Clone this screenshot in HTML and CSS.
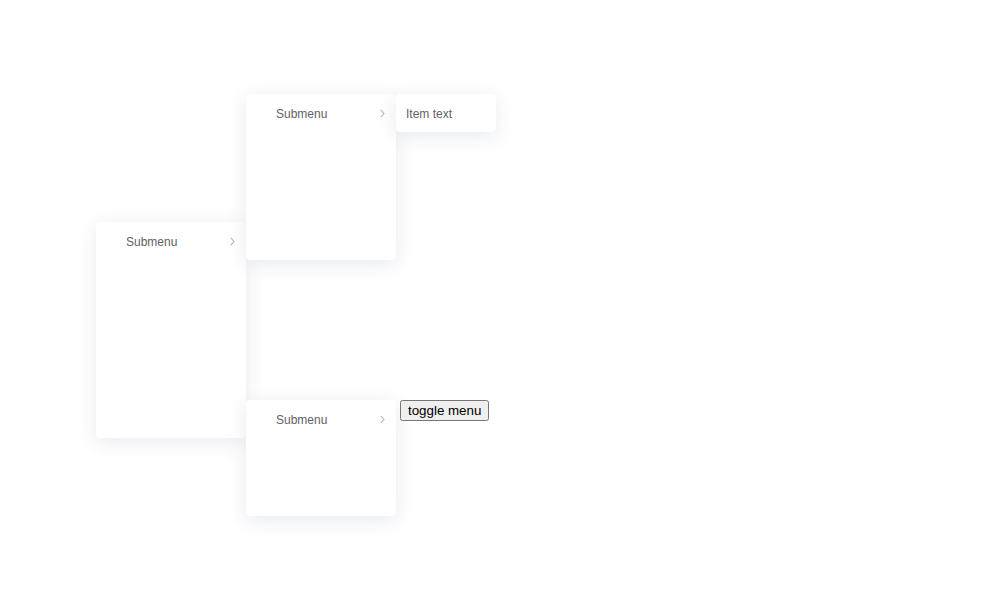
FILE: index.html
```html
<!DOCTYPE html>
<html>
<head>
<meta charset="utf-8">
<link rel="stylesheet" href="styles.css">
</head>
<body>
<div class="canvas">
  <div class="menu menu-main">
    <div class="item">
      <span class="label">Submenu</span>
      <svg class="chev" width="5" height="9" viewBox="0 0 5 9"><path d="M0.8 0.8 L4 4.5 L0.8 8.2" fill="none" stroke="#b4b9c2" stroke-width="1.1"/></svg>
    </div>
  </div>
  <div class="menu menu-sub1">
    <div class="item">
      <span class="label">Submenu</span>
      <svg class="chev" width="5" height="9" viewBox="0 0 5 9"><path d="M0.8 0.8 L4 4.5 L0.8 8.2" fill="none" stroke="#b4b9c2" stroke-width="1.1"/></svg>
    </div>
  </div>
  <div class="menu menu-leaf">
    <div class="item leaf">
      <span class="label">Item text</span>
    </div>
  </div>
  <div class="menu menu-sub2">
    <div class="item">
      <span class="label">Submenu</span>
      <svg class="chev" width="5" height="9" viewBox="0 0 5 9"><path d="M0.8 0.8 L4 4.5 L0.8 8.2" fill="none" stroke="#b4b9c2" stroke-width="1.1"/></svg>
    </div>
  </div>
  <button class="toggle">toggle menu</button>
</div>
</body>
</html>
```

FILE: styles.css
```css
html, body {
  margin: 0;
  padding: 0;
  background: #ffffff;
}
.canvas {
  position: relative;
  width: 1008px;
  height: 600px;
}
.menu {
  position: absolute;
  background: #ffffff;
  border-radius: 4px;
  box-shadow: 0 4px 20px 0 rgba(30, 50, 100, 0.1);
  box-sizing: border-box;
  font-family: "Liberation Sans", Arial, sans-serif;
  font-size: 12px;
  color: #606266;
}
.menu-main { left: 96px; top: 222px; width: 150px; height: 216px; }
.menu-sub1 { left: 246px; top: 94px; width: 150px; height: 166px; }
.menu-leaf { left: 396px; top: 94px; width: 100px; height: 38px; }
.menu-sub2 { left: 246px; top: 400px; width: 150px; height: 116px; }
.item {
  display: flex;
  align-items: center;
  height: 38px;
  padding: 1px 11px 0 30px;
  box-sizing: border-box;
}
.item.leaf { padding-left: 10px; }
.label { flex: 1; }
.chev { display: block; }
.toggle {
  position: absolute;
  left: 400px;
  top: 400px;
}
```
